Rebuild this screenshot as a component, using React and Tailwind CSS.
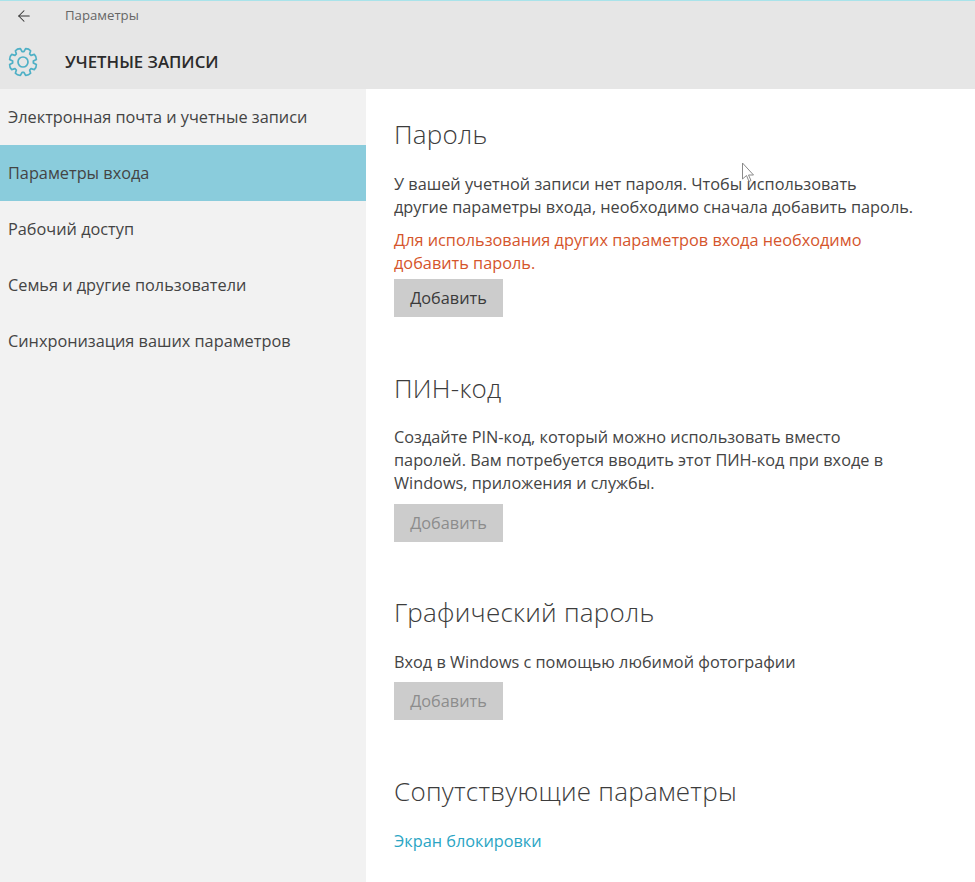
import { ArrowLeft } from 'lucide-react';

const menuItems = [
  { label: 'Электронная почта и учетные записи' },
  { label: 'Параметры входа', active: true },
  { label: 'Рабочий доступ' },
  { label: 'Семья и другие пользователи' },
  { label: 'Синхронизация ваших параметров' },
];

// 8 rounded teeth, like the Windows 10 settings gear
const gearPath = () => {
  const point = (r, a) => `${(15 + r * Math.cos(a)).toFixed(2)} ${(15 + r * Math.sin(a)).toFixed(2)}`;
  let d = '';
  for (let i = 0; i < 8; i++) {
    const a = (i * Math.PI) / 4 + Math.PI / 8;
    d += `${i === 0 ? 'M' : 'L'}${point(10.4, a - 0.3)} `;
    d += `L${point(13.6, a - 0.2)} Q${point(14.6, a)} ${point(13.6, a + 0.2)} L${point(10.4, a + 0.3)} `;
  }
  return d + 'Z';
};

const GearIcon = () => (
  <svg width="30" height="30" viewBox="0 0 30 30" fill="none" stroke="#4fb0c6" strokeWidth="1.7" strokeLinejoin="round">
    <path d={gearPath()} />
    <circle cx="15" cy="15" r="5" />
  </svg>
);

const AddButton = ({ disabled }) => (
  <button
    className={`w-[109px] h-[38px] bg-[#cccccc] text-[16.3px] ${disabled ? 'text-[#8c8c8c]' : 'text-[#3a3a3a]'}`}
  >
    Добавить
  </button>
);

const SectionTitle = ({ children }) => (
  <h2 className="text-[26px] leading-[34px] font-light text-[#3c3c3c] tracking-[0.25px]">{children}</h2>
);

export default function App() {
  return (
    <div className="relative w-[975px] h-[882px] overflow-hidden flex flex-col bg-white text-[16.3px] font-['Open_Sans','Noto_Sans',sans-serif]">
      {/* Header */}
      <div className="h-[89px] shrink-0 bg-[#e6e6e6] border-t border-[#a9e3ea]">
        <div className="flex items-center h-[30px]">
          <div className="w-[65px] pl-[15px]">
            <ArrowLeft className="w-[18px] h-[18px] text-[#333333]" strokeWidth={1.4} />
          </div>
          <span className="text-[13.2px] text-[#666666]">Параметры</span>
        </div>
        <div className="flex items-center h-[44px] mt-[9px]">
          <div className="w-[65px] pl-[8px]">
            <GearIcon />
          </div>
          <span className="text-[16.8px] font-semibold text-[#2b2b2b]">УЧЕТНЫЕ ЗАПИСИ</span>
        </div>
      </div>

      <div className="flex flex-1 min-h-0">
        {/* Sidebar */}
        <div className="w-[366px] shrink-0 bg-[#f2f2f2]">
          {menuItems.map((item, index) => (
            <div
              key={index}
              className={`h-[56px] flex items-center pl-[8px] text-[#444444] ${item.active ? 'bg-[#8accdc]' : ''}`}
            >
              {item.label}
            </div>
          ))}
        </div>

        {/* Content */}
        <div className="flex-1 pl-[28px] pt-[28px] text-[#444444] leading-[23px]">
          <SectionTitle>Пароль</SectionTitle>
          <p className="mt-[22px]">
            У вашей учетной записи нет пароля. Чтобы использовать
            <br />
            другие параметры входа, необходимо сначала добавить пароль.
          </p>
          <p className="mt-[10px] text-[#d5552c]">
            Для использования других параметров входа необходимо
            <br />
            добавить пароль.
          </p>
          <div className="mt-[4px]">
            <AddButton />
          </div>

          <div className="mt-[54px]">
            <SectionTitle>ПИН-код</SectionTitle>
          </div>
          <p className="mt-[21px]">
            Создайте PIN-код, который можно использовать вместо
            <br />
            паролей. Вам потребуется вводить этот ПИН-код при входе в
            <br />
            Windows, приложения и службы.
          </p>
          <div className="mt-[9px]">
            <AddButton disabled />
          </div>

          <div className="mt-[53px]">
            <SectionTitle>Графический пароль</SectionTitle>
          </div>
          <p className="mt-[22px]">Вход в Windows с помощью любимой фотографии</p>
          <div className="mt-[8px]">
            <AddButton disabled />
          </div>

          <div className="mt-[54px]">
            <SectionTitle>Сопутствующие параметры</SectionTitle>
          </div>
          <a className="block mt-[22px] text-[#2aa5c4]">Экран блокировки</a>
        </div>
      </div>

      {/* Mouse pointer */}
      <svg className="absolute left-[741px] top-[162px]" width="15" height="22" viewBox="0 0 15 22" fill="#ffffff" stroke="#8a8a8a" strokeWidth="1">
        <path d="M1.5 1v16l4-3.5 2.5 6 2-1-2.5-5.5h5z" />
      </svg>
    </div>
  );
}
